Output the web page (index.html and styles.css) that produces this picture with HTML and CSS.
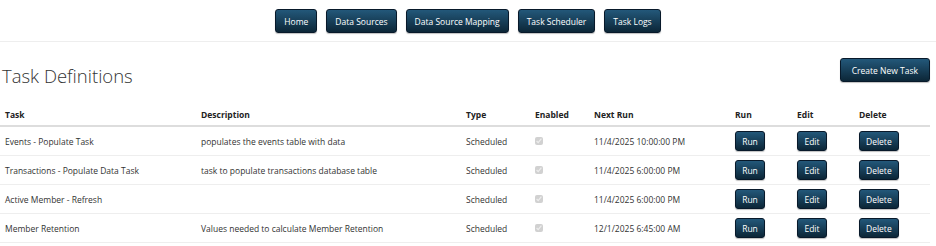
FILE: index.html
```html
<!DOCTYPE html>
<html lang="en">
<head>
    <meta charset="UTF-8">
    <meta name="viewport" content="width=device-width, initial-scale=1.0">
    <title>Task Definitions</title>
    <link rel="stylesheet" href="styles.css">
</head>
<body>
    <div id="navBar">
        <button class="navButton">Home</button>
        <button class="navButton">Data Sources</button>
        <button class="navButton">Data Source Mapping</button>
        <button class="navButton">Task Scheduler</button>
        <button class="navButton">Task Logs</button>
    </div>
    <div id="content">
        <div id="pageHeader">
            <h1>Task Definitions</h1>
            <button class="navButton" id="createButton">Create New Task</button>
        </div>
        <table id="taskTable">
            <colgroup>
                <col class="colTask">
                <col class="colDesc">
                <col class="colType">
                <col class="colEnabled">
                <col class="colNext">
                <col class="colRun">
                <col class="colEdit">
                <col class="colDelete">
            </colgroup>
            <thead>
                <tr>
                    <th>Task</th>
                    <th>Description</th>
                    <th>Type</th>
                    <th>Enabled</th>
                    <th>Next Run</th>
                    <th>Run</th>
                    <th>Edit</th>
                    <th>Delete</th>
                </tr>
            </thead>
            <tbody>
                <tr>
                    <td>Events - Populate Task</td>
                    <td>populates the events table with data</td>
                    <td>Scheduled</td>
                    <td><input type="checkbox" checked disabled></td>
                    <td>11/4/2025 10:00:00 PM</td>
                    <td><button class="rowButton">Run</button></td>
                    <td><button class="rowButton">Edit</button></td>
                    <td><button class="rowButton">Delete</button></td>
                </tr>
                <tr>
                    <td>Transactions - Populate Data Task</td>
                    <td>task to populate transactions database table</td>
                    <td>Scheduled</td>
                    <td><input type="checkbox" checked disabled></td>
                    <td>11/4/2025 6:00:00 PM</td>
                    <td><button class="rowButton">Run</button></td>
                    <td><button class="rowButton">Edit</button></td>
                    <td><button class="rowButton">Delete</button></td>
                </tr>
                <tr>
                    <td>Active Member - Refresh</td>
                    <td></td>
                    <td>Scheduled</td>
                    <td><input type="checkbox" checked disabled></td>
                    <td>11/4/2025 6:00:00 PM</td>
                    <td><button class="rowButton">Run</button></td>
                    <td><button class="rowButton">Edit</button></td>
                    <td><button class="rowButton">Delete</button></td>
                </tr>
                <tr>
                    <td>Member Retention</td>
                    <td>Values needed to calculate Member Retention</td>
                    <td>Scheduled</td>
                    <td><input type="checkbox" checked disabled></td>
                    <td>12/1/2025 6:45:00 AM</td>
                    <td><button class="rowButton">Run</button></td>
                    <td><button class="rowButton">Edit</button></td>
                    <td><button class="rowButton">Delete</button></td>
                </tr>
            </tbody>
        </table>
    </div>
</body>
</html>
```

FILE: styles.css
```css
body {
    margin: 0;
    background: #fff;
    color: #333;
    font-family: "Open Sans", "Noto Sans", sans-serif;
    font-size: 8.5px;
}
#navBar {
    display: flex;
    justify-content: center;
    gap: 9px;
    padding: 9px 0 8px;
    border-bottom: 1px solid #eee;
}
.navButton {
    height: 24px;
    padding: 0 8px;
    background: linear-gradient(#23587a, #0c2637);
    border: 1px solid #08192a;
    border-radius: 3px;
    color: #fff;
    font-family: inherit;
    font-size: 8.5px;
    box-shadow: 0 1px 1px rgba(0, 0, 0, 0.25);
    cursor: pointer;
}
#content {
    padding: 0 6px 0 0;
}
#pageHeader {
    display: flex;
    justify-content: space-between;
    align-items: flex-start;
    padding-top: 16px;
}
#pageHeader h1 {
    margin: 5px 0 0 2px;
    font-size: 18.5px;
    font-weight: 300;
    color: #333;
}
#createButton {
    height: 24px;
    padding: 0 11px;
}
#taskTable {
    width: 100%;
    margin-top: 16px;
    border-collapse: collapse;
    table-layout: fixed;
}
.colTask { width: 196px; }
.colDesc { width: 265px; }
.colType { width: 69px; }
.colEnabled { width: 59px; }
.colNext { width: 141px; }
.colRun { width: 62px; }
.colEdit { width: 62px; }
#taskTable th {
    text-align: left;
    font-weight: bold;
    color: #222;
    padding: 5px 5px 5px;
    border-bottom: 2px solid #ddd;
}
#taskTable td {
    padding: 0 5px;
    height: 28px;
    border-bottom: 1px solid #eee;
    vertical-align: middle;
}
#taskTable input[type="checkbox"] {
    width: 8px;
    height: 8px;
    margin: 0;
}
.rowButton {
    height: 20px;
    min-width: 30px;
    padding: 0 6px;
    background: linear-gradient(#23587a, #0c2637);
    border: 1px solid #08192a;
    border-radius: 3px;
    color: #fff;
    font-family: inherit;
    font-size: 8.5px;
    box-shadow: 0 1px 1px rgba(0, 0, 0, 0.25);
    cursor: pointer;
}
```
